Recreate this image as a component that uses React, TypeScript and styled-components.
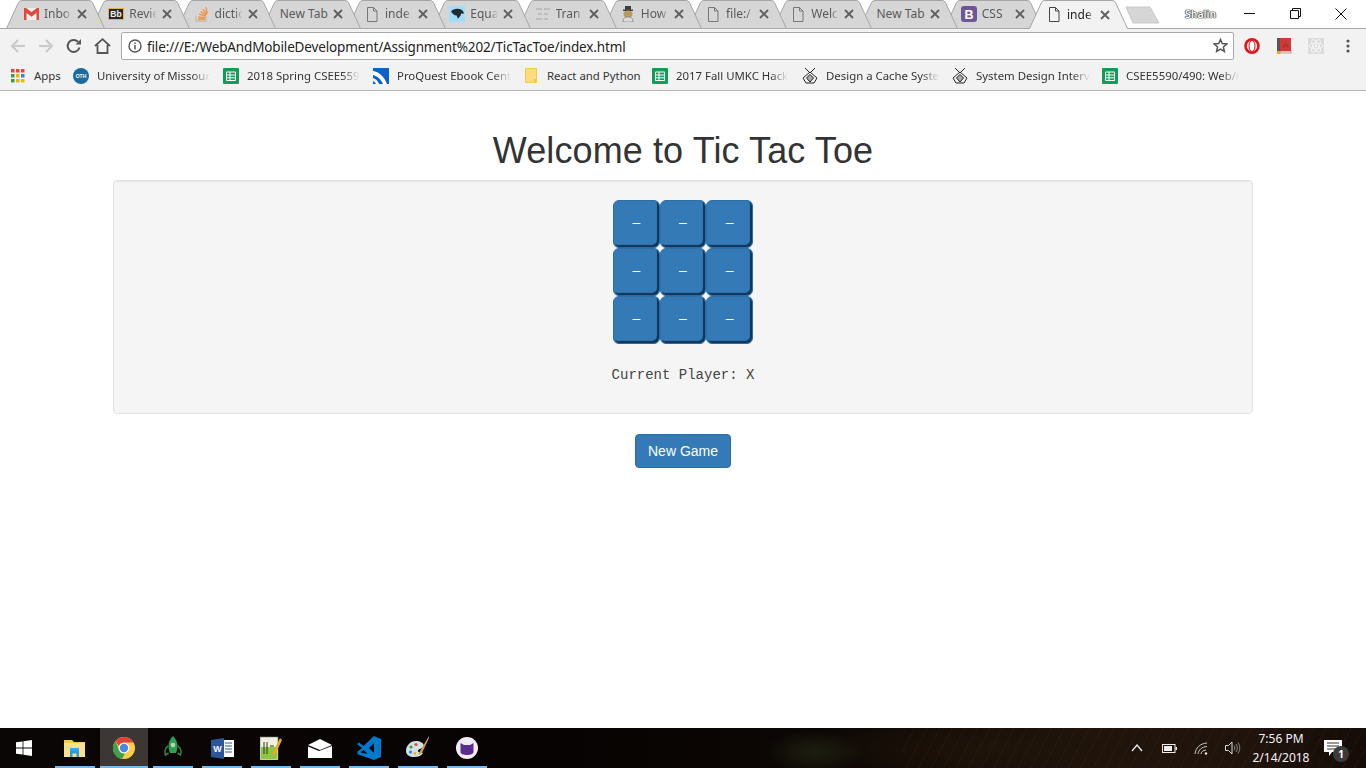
import React from "react";
import styled, { createGlobalStyle } from "styled-components";

const Global = createGlobalStyle`
  html, body { margin: 0; padding: 0; height: 100%; overflow: hidden; background: #fff; }
  #root { height: 100%; }
  * { box-sizing: border-box; }
`;

const Screen = styled.div`
  display: flex; flex-direction: column; width: 1366px; height: 768px; overflow: hidden;
  font-family: "Noto Sans", "Open Sans", sans-serif;
`;

/* ---------- title bar and tabs ---------- */
const TitleBar = styled.div`
  display: flex; height: 29px; background: #fff; border-bottom: 1px solid #a6a6a6; padding-left: 6px; flex: none;
`;
const TabWrap = styled.div<{ $z: number; $active?: boolean }>`
  position: relative; z-index: ${p => p.$z}; width: 99px; height: ${p => (p.$active ? 29 : 28)}px; flex: none;
  display: flex; align-items: center; padding: 0 18px 0 17px;
  & + & { margin-left: -13.75px; }
`;
const TabShape = styled.svg`
  position: absolute; left: 0; top: 0; width: 99px; height: 29px; z-index: -1;
`;
const FavSlot = styled.span`
  width: 16px; height: 16px; margin-right: 5px; flex: none; display: flex; align-items: center; justify-content: center;
`;
const TabTitle = styled.span<{ $active?: boolean; $plain?: boolean }>`
  flex: 1; min-width: 0; overflow: hidden; white-space: nowrap; font-size: 12px; line-height: 16px;
  margin-left: ${p => (p.$plain ? "1px" : "0")};
  color: ${p => (p.$active ? "#222" : "#5a5a5a")};
  ${p => p.$plain ? "" : `
    -webkit-mask-image: linear-gradient(to right, #000 70%, transparent 100%);
    mask-image: linear-gradient(to right, #000 70%, transparent 100%);
  `}
`;
const CloseSlot = styled.span`
  width: 10px; height: 10px; margin-left: 5px; flex: none; display: flex;
`;
const NewTabButton = styled.svg`
  width: 36px; height: 19px; margin: 6px 0 0 -3px; flex: none;
`;
const Profile = styled.span`
  margin-left: 24px; width: 31px; font-size: 10.5px; line-height: 28px; color: #fff; font-weight: 600;
  text-shadow: 0 0 1px #222, 0 0 1px #222, 0 0 1px #333, 0 0 1px #333;
  white-space: nowrap; flex: none;
`;
const WindowControls = styled.div`
  margin-left: auto; padding-right: 2px; display: flex; flex: none;
`;
const WinButton = styled.div`
  width: 46px; height: 27px; display: flex; align-items: center; justify-content: center;
`;

/* ---------- toolbar ---------- */
const Toolbar = styled.div`
  display: flex; align-items: center; height: 33px; background: #f2f2f2; padding: 0 2px 0 4px; flex: none;
`;
const NavButton = styled.div`
  width: 28px; height: 28px; display: flex; align-items: center; justify-content: center; flex: none;
`;
const Omnibox = styled.div`
  flex: 1; height: 28px; margin: 0 2px 0 5px; background: #fff; border: 1px solid #a9a9a9; border-radius: 2px;
  display: flex; align-items: center; padding: 0 5px 0 6px; min-width: 0;
`;
const UrlText = styled.span`
  flex: 1; margin-left: 5px; padding-top: 2px; font-size: 13.5px; letter-spacing: -0.14px; color: #222; white-space: nowrap;
`;
const ExtButton = styled.div`
  width: 32px; height: 28px; display: flex; align-items: center; justify-content: center; flex: none;
`;

/* ---------- bookmarks ---------- */
const Bookmarks = styled.div`
  display: flex; align-items: center; height: 29px; background: #f2f2f2; border-bottom: 1px solid #b4b4b4;
  padding-left: 10px; flex: none;
`;
const Bookmark = styled.div<{ $w: number }>`
  width: ${p => p.$w}px; flex: none; display: flex; align-items: center; height: 100%; padding-bottom: 1px;
`;
const BookmarkIcon = styled.span`
  width: 16px; height: 16px; margin-right: 8px; flex: none; display: flex; align-items: center; justify-content: center;
`;
const BookmarkText = styled.span<{ $fade?: boolean }>`
  font-size: 11.4px; color: #333; white-space: nowrap; overflow: hidden; max-width: 114px;
  ${p => p.$fade ? "-webkit-mask-image: linear-gradient(to right, #000 84%, transparent 100%); mask-image: linear-gradient(to right, #000 84%, transparent 100%);" : ""}
`;

/* ---------- page ---------- */
const Page = styled.main`
  flex: 1; background: #fff; min-height: 0; display: flex; flex-direction: column; align-items: center;
  font-family: "Liberation Sans", Arial, sans-serif; color: #333;
`;
const Container = styled.div`
  width: 1170px; padding: 0 15px; text-align: center;
`;
const Heading = styled.h1`
  margin: 40px 0 9px; font-size: 36px; line-height: 40px; font-weight: 500; letter-spacing: 0.1px; color: #333;
`;
const Well = styled.section`
  min-height: 20px; padding: 19px; margin-bottom: 20px; background: #f5f5f5; border: 1px solid #e3e3e3; border-radius: 4px;
  box-shadow: inset 0 1px 1px rgba(0,0,0,.05);
  display: flex; flex-direction: column; align-items: center;
`;
const Board = styled.div`
  display: grid; grid-template-columns: repeat(3, 46.67px); grid-auto-rows: 48px; width: 140px;
`;
const Cell = styled.button`
  margin: 0; padding: 0 0 4px; border: 1px solid #2e6da4; border-radius: 6px; background: #337ab7; color: #fff;
  box-shadow: inset -2px -2px 1px #123456;
  font-family: "Liberation Sans", Arial, sans-serif; font-size: 14px; line-height: 20px; display: flex; align-items: center; justify-content: center;
`;
const Status = styled.p`
  margin: 21px 0 9px; font-family: "Liberation Mono", "Courier New", monospace; font-size: 14px; line-height: 20px; color: #444;
`;
const PrimaryButton = styled.button`
  padding: 6px 12px; font-family: "Liberation Sans", Arial, sans-serif; font-size: 14px; line-height: 20px; color: #fff;
  background: #337ab7; border: 1px solid #2e6da4; border-radius: 4px;
`;

/* ---------- taskbar ---------- */
const Taskbar = styled.footer`
  height: 40px; flex: none; display: flex; align-items: stretch; color: #fff;
  background:
    repeating-linear-gradient(118deg, rgba(110,85,55,.09) 0 1px, rgba(0,0,0,0) 1px 11px) right / 34% 100% no-repeat,
    radial-gradient(ellipse 50px 22px at 815px 24px, #1d1f10 0%, rgba(29,31,16,0) 100%),
    radial-gradient(ellipse 200px 30px at 1020px 20px, #1f1409 0%, rgba(31,20,9,0) 100%),
    linear-gradient(to right, #0a0606 0%, #0b0505 15%, #060302 40%, #0d0704 60%, #20140c 80%, #1f130c 92%, #150c07 100%);
`;
const StartButton = styled.div`
  width: 51px; display: flex; align-items: center; justify-content: center; padding-right: 3px; flex: none;
`;
const TaskItem = styled.div<{ $active?: boolean }>`
  position: relative; width: 49px; flex: none; display: flex; align-items: center; justify-content: center; padding-right: 1px;
  background: ${p => (p.$active ? "linear-gradient(to right, #3c3634 48px, transparent 48px)" : "transparent")};
  &::after {
    content: ""; position: absolute; bottom: 0; height: 2px; background: #76b9ed;
    left: ${p => (p.$active ? "0" : "4px")}; right: ${p => (p.$active ? "1px" : "5px")};
  }
`;
const Tray = styled.div`
  margin-left: auto; display: flex; align-items: center; padding-right: 13px; flex: none;
`;
const TrayItem = styled.div`
  width: 32px; display: flex; align-items: center; justify-content: center; height: 100%;
`;
const Clock = styled.div`
  width: 64px; text-align: center; font-size: 12px; line-height: 19px; color: #f2f2f2; white-space: nowrap;
`;
const Notify = styled.div`
  position: relative; width: 40px; height: 100%; display: flex; align-items: center; justify-content: center;
`;
const NotifyBadge = styled.span`
  position: absolute; left: 20px; top: 18px; width: 16px; height: 16px; border-radius: 50%; background: #3b3b3b;
  font-size: 10px; font-weight: 700; line-height: 16px; text-align: center; color: #fff;
`;

/* ---------- drawings ---------- */
const Gmail = () => (
  <svg width="15" height="12" viewBox="0 0 15 12">
    <rect width="15" height="12" fill="#eee" />
    <path d="M0 12V1.5L7.5 7 15 1.5V12h-2.5V5L7.5 8.7 2.5 5v7z" fill="#db4c3f" />
    <path d="M0 0h2l5.5 4L13 0h2v2L7.5 7.5 0 2z" fill="#db4c3f" />
  </svg>
);
const Bb = () => (
  <svg width="16" height="12" viewBox="0 0 16 12">
    <rect x=".5" y=".5" width="15" height="11" fill="#262626" stroke="#e6b04a" />
    <text x="8" y="9" textAnchor="middle" fontFamily="Liberation Sans" fontWeight="700" fontSize="8.5" fill="#f4f4f4">Bb</text>
  </svg>
);
const StackIcon = () => (
  <svg width="13" height="16" viewBox="0 0 13 16" fill="none" stroke="#f2913d" strokeWidth="1.3">
    <path d="M1 10v5h10v-5" stroke="#c9b9a8" />
    <path d="M3 13h7M3.2 10.800l6.800.9M4 8.200l6.400 2M5.600 5.600l5.600 3.500M7.800 3.400l4.200 4.800M10.600 1.200l1.800 6" />
  </svg>
);
const FileIcon = ({ color = "#777" }: { color?: string }) => (
  <svg width="12" height="15" viewBox="0 0 12 15" fill="none" stroke={color} strokeWidth="1">
    <path d="M1.500.5h6l3.500 3.500v10.500H1.500z" />
    <path d="M7.500.5V4H11" />
  </svg>
);
const EquaIcon = () => (
  <svg width="16" height="16" viewBox="0 0 16 16">
    <rect width="16" height="16" fill="#a2dcf5" />
    <path d="M2 5.500C4 2.500 9 2 12 3.500c1.500.8 2.500 2 3 4-1 .2-2 .2-2.800 0-.5 2.500-2 4-3.500 5l-1-3C5 9.500 3.500 7.500 2 5.500z" fill="#1f2b33" />
  </svg>
);
const TransIcon = () => (
  <svg width="14" height="12" viewBox="0 0 14 12" fill="none" stroke="#bdbdbd" strokeWidth="2">
    <path d="M0 1h6M8 1h6M2 6h4M8 6h4M0 11h6M8 11h4" />
  </svg>
);
const HowIcon = () => (
  <svg width="14" height="16" viewBox="0 0 14 16">
    <rect x="4" y="0" width="6" height="4" fill="#3e3e3e" />
    <rect x="2" y="3.500" width="10" height="1.500" fill="#3e3e3e" />
    <ellipse cx="7" cy="8" rx="4.500" ry="3.500" fill="#b89a60" />
    <path d="M2 16c0-4 2-5 5-5s5 1 5 5z" fill="#ddd" stroke="#666" strokeWidth=".6" />
  </svg>
);
const BootstrapIcon = () => (
  <svg width="16" height="16" viewBox="0 0 16 16">
    <rect width="16" height="16" rx="3" fill="#6f5499" />
    <text x="8" y="12.500" textAnchor="middle" fontFamily="Liberation Sans" fontWeight="700" fontSize="12.500" fill="#fff">B</text>
  </svg>
);
const CloseX = ({ color = "#5f5f5f" }: { color?: string }) => (
  <svg width="10" height="10" viewBox="0 0 10 10" stroke={color} strokeWidth="1.800" fill="none">
    <path d="M1 1l8 8M9 1l-8 8" />
  </svg>
);
const TabBg = ({ active }: { active?: boolean }) => (
  <TabShape viewBox="0 0 99 29">
    {active ? (
      <>
        <path d="M.5 29 12.500 2.500Q13.500.5 16 .5H83Q85.500.5 86.500 2.500L98.500 29z" fill="#f2f2f2" />
        <path d="M.5 28.500 12.500 2.500Q13.500.5 16 .5H83Q85.500.5 86.500 2.500L98.500 28.500" fill="none" stroke="#a6a6a6" />
      </>
    ) : (
      <path d="M.5 28.500 12.500 2.500Q13.500.5 16 .5H83Q85.500.5 86.500 2.500L98.500 28.500z" fill="#d6d6d6" stroke="#a6a6a6" />
    )}
  </TabShape>
);
const NavArrow = ({ right, color }: { right?: boolean; color: string }) => (
  <svg width="16" height="14" viewBox="0 0 16 14" fill="none" stroke={color} strokeWidth="2" style={right ? { transform: "scaleX(-1)" } : undefined}>
    <path d="M15 7H2M8 1 2 7l6 6" />
  </svg>
);
const Reload = () => (
  <svg width="16" height="16" viewBox="0 0 16 16" fill="none">
    <path d="M13.500 9.500A6 6 0 1 1 12 3.700" stroke="#555" strokeWidth="2" />
    <path d="M9.500 6.500H15V1z" fill="#555" />
  </svg>
);
const HomeIcon = () => (
  <svg width="17" height="16" viewBox="0 0 17 16" fill="none" stroke="#555" strokeWidth="1.800">
    <path d="M1 8 8.500 1.200 16 8M3.500 7v8h10V7" />
  </svg>
);
const InfoIcon = () => (
  <svg width="14" height="14" viewBox="0 0 14 14" fill="none">
    <circle cx="7" cy="7" r="6" stroke="#555" strokeWidth="1.400" />
    <path d="M7 6v4.500M7 3.500v1.400" stroke="#555" strokeWidth="1.500" />
  </svg>
);
const StarIcon = () => (
  <svg width="15" height="15" viewBox="0 0 15 15" fill="none" stroke="#555" strokeWidth="1.500">
    <path d="M7.500 1.500 9.300 5.600l4.500.4-3.400 3 1 4.400-3.900-2.300-3.900 2.300 1-4.400-3.400-3 4.500-.4z" />
  </svg>
);
const OperaIcon = () => (
  <svg width="16" height="16" viewBox="0 0 16 16" fill="none">
    <ellipse cx="8" cy="8" rx="6.500" ry="6.700" stroke="#e0141d" strokeWidth="2.600" />
    <ellipse cx="8" cy="8" rx="3" ry="5.500" fill="#fff" stroke="#e0141d" strokeWidth="1" />
  </svg>
);
const BookIcon = () => (
  <svg width="15" height="16" viewBox="0 0 15 16">
    <rect x="0" y="0" width="3" height="15" fill="#555" />
    <rect x="3" y="0" width="11" height="13" fill="#cf3a34" />
    <rect x="3" y="13" width="11" height="2" fill="#eee" stroke="#c33" strokeWidth=".5" />
    <rect x="0" y="13" width="3" height="3" fill="#e8a820" />
    <text x="8.500" y="10" textAnchor="middle" fontFamily="Liberation Sans" fontSize="9" fill="#a82420">A</text>
  </svg>
);
const ReactExt = () => (
  <svg width="16" height="16" viewBox="0 0 16 16" fill="none">
    <rect width="16" height="16" fill="#dcdcdc" />
    <g stroke="#f5f5f5" strokeWidth=".9">
      <ellipse cx="8" cy="8" rx="7" ry="2.800" />
      <ellipse cx="8" cy="8" rx="7" ry="2.800" transform="rotate(60 8 8)" />
      <ellipse cx="8" cy="8" rx="7" ry="2.800" transform="rotate(120 8 8)" />
    </g>
    <circle cx="8" cy="8" r="1.400" fill="#f5f5f5" />
  </svg>
);
const MenuDots = () => (
  <svg width="4" height="14" viewBox="0 0 4 14" fill="#555">
    <circle cx="2" cy="2" r="1.600" /><circle cx="2" cy="7" r="1.600" /><circle cx="2" cy="12" r="1.600" />
  </svg>
);
const AppsIcon = () => (
  <svg width="14" height="14" viewBox="0 0 14 14">
    {[["#e8453c", "#e8453c", "#e8453c"], ["#3a9b4c", "#f5b400", "#3a7de0"], ["#3a9b4c", "#f5b400", "#f5b400"]].map((row, y) =>
      row.map((c, x) => <rect key={`${x}${y}`} x={x * 5} y={y * 5} width="3.500" height="3.500" fill={c} />)
    )}
  </svg>
);
const UmIcon = () => (
  <svg width="16" height="16" viewBox="0 0 16 16">
    <circle cx="8" cy="8" r="8" fill="#1d6a9c" />
    <text x="8" y="10" textAnchor="middle" fontFamily="Liberation Sans" fontWeight="700" fontSize="5" fill="#fff">OTH</text>
  </svg>
);
const SheetIcon = () => (
  <svg width="16" height="16" viewBox="0 0 16 16" fill="none">
    <rect width="16" height="16" rx="1" fill="#109d58" />
    <path d="M3.500 4h9v8.500h-9zM3.500 7h9M3.500 9.800h9M7 4v8.500" stroke="#fff" strokeWidth="1" />
  </svg>
);
const ProQuestIcon = () => (
  <svg width="16" height="16" viewBox="0 0 16 16">
    <rect width="16" height="16" fill="#0d62c9" />
    <path d="M0 3c6 1 11 5 14 13h-4C8 11 4 8 0 7zM0 10c3 1 5 3 6 6H3c-.5-1.500-1.800-2.500-3-3z" fill="#fff" />
  </svg>
);
const FolderBm = () => (
  <svg width="12" height="15" viewBox="0 0 12 15">
    <path d="M.5.500h11v14H.5z" fill="#fbdc7f" stroke="#f2c94c" />
    <rect x="9" y="11" width="2.500" height="3.500" fill="#f2c94c" />
  </svg>
);
const CacheIcon = () => (
  <svg width="16" height="16" viewBox="0 0 16 16" fill="none" stroke="#222" strokeWidth="1">
    <path d="M3 0l5 5 5-5" />
    <path d="M1 10l7-6 7 6-3 5H4z" />
    <path d="M4.500 10l3.500 4 3.500-4L8 6.500z" fill="#aaa" />
  </svg>
);
const WinLogo = () => (
  <svg width="16" height="16" viewBox="0 0 16 16" fill="#fff">
    <path d="M0 2.300 6.600 1.400v6.200H0zM7.400 1.300 16 0v7.600H7.400zM0 8.400h6.600v6.200L0 13.700zM7.400 8.400H16V16l-8.600-1.300z" />
  </svg>
);
const Explorer = () => (
  <svg width="22" height="18" viewBox="0 0 22 18">
    <path d="M0 1h8l2 2h11v15H0z" fill="#f5c94e" />
    <rect x="0" y="4" width="21" height="14" fill="#fbe08a" />
    <path d="M6 18v-7h9v7h-2.500v-3.500h-4V18z" fill="#2a9ae0" />
    <rect x="6" y="9" width="9" height="2.500" fill="#35aaf0" />
  </svg>
);
const ChromeLogo = () => (
  <svg width="22" height="22" viewBox="0 0 22 22">
    <circle cx="11" cy="11" r="11" fill="#ffce44" />
    <path d="M11 0a11 11 0 0 1 9.530 5.500H11A5.500 5.500 0 0 0 5.800 9.200L2.600 3.900A11 11 0 0 1 11 0z" fill="#e0433a" />
    <path d="M2.600 3.900 6.100 13.600A5.500 5.500 0 0 0 12 16.400L9 22A11 11 0 0 1 2.600 3.900z" fill="#3ca24f" />
    <circle cx="11" cy="11" r="5.300" fill="#fff" />
    <circle cx="11" cy="11" r="4.200" fill="#4a86e8" />
  </svg>
);
const Rocket = () => (
  <svg width="18" height="24" viewBox="0 0 18 24">
    <path d="M9 0c3 3 4.500 6 4.500 10 0 3-.8 5-1.500 7H6c-.7-2-1.500-4-1.500-7C4.500 6 6 3 9 0z" fill="#2f9e4f" />
    <circle cx="9" cy="9" r="2.300" fill="#a8e2a6" />
    <path d="M4 10c-3 2-3.500 6-2.500 9l3-2M14 10c3 2 3.500 6 2.500 9l-3-2" fill="none" stroke="#3a7d42" strokeWidth="1.600" />
  </svg>
);
const Word = () => (
  <svg width="23" height="21" viewBox="0 0 23 21">
    <rect x="9" y="2" width="14" height="17" fill="#fff" />
    <path d="M14 5h7M14 8h7M14 11h7M14 14h7" stroke="#2b579a" strokeWidth="1.200" />
    <path d="M0 2 13 0v21L0 19z" fill="#2b579a" />
    <text x="6.500" y="14" textAnchor="middle" fontFamily="Liberation Sans" fontWeight="700" fontSize="9" fill="#fff">W</text>
  </svg>
);
const Notepad = () => (
  <svg width="22" height="24" viewBox="0 0 22 24">
    <rect x="0" y="1" width="18" height="23" fill="#eef2dc" stroke="#777" strokeWidth=".6" />
    <rect x="1" y="11" width="16" height="12" fill="#8dc63f" />
    <path d="M4 6v12M7 6v12M10 10h4" stroke="#333" strokeWidth="1" />
    <path d="M20 2 12 18l3 1 7-15z" fill="#e6a82a" />
  </svg>
);
const Mail = () => (
  <svg width="24" height="19" viewBox="0 0 24 19">
    <path d="M0 6 12 0l12 6-12 5z" fill="#fff" />
    <path d="M0 7.500 11 12l13-5V19H0z" fill="#fff" />
  </svg>
);
const VsCode = () => (
  <svg width="24" height="24" viewBox="0 0 24 24">
    <path d="M17 0 24 3v18l-7 3L0 18l1-2 16 3z" fill="#007acc" />
    <path d="M17 0v24L6.500 14 2 17.500 0 16l5-4-5-4 2-1.500L6.500 10zM17 7l-5 5 5 5z" fill="#007acc" fillRule="evenodd" />
  </svg>
);
const Palette = () => (
  <svg width="24" height="24" viewBox="0 0 24 24">
    <path d="M10 5C4 5 0 10 0 15c0 4 4 6 8 6s7-1 9-4c-2-1-5 0-5-2 0-3 6-2 6-5 0-3-4-5-8-5z" fill="#cfe3e8" />
    <circle cx="5" cy="11" r="1.600" fill="#3a9b4c" /><circle cx="10" cy="8.500" r="1.600" fill="#e8453c" />
    <circle cx="4.500" cy="16" r="1.600" fill="#3a7de0" /><circle cx="9" cy="17.500" r="1.400" fill="#f5b400" />
    <path d="M23 0 14 15l-2 4 4-2L23 2z" fill="#d29a4a" />
  </svg>
);
const CatCircle = () => (
  <svg width="22" height="22" viewBox="0 0 22 22">
    <circle cx="11" cy="11" r="11" fill="#f2edf5" />
    <path d="M4.500 6 8 8h6l3.500-2v9c0 2-3 3-6.500 3s-6.500-1-6.500-3z" fill="#5c2d91" />
  </svg>
);
const Chevron = () => (
  <svg width="12" height="8" viewBox="0 0 12 8" fill="none" stroke="#eee" strokeWidth="1.300"><path d="M1 7l5-6 5 6" /></svg>
);
const Battery = () => (
  <svg width="15" height="9" viewBox="0 0 15 9" fill="none">
    <rect x=".5" y=".5" width="12.500" height="8" stroke="#eee" />
    <rect x="2" y="2" width="8" height="5" fill="#eee" />
    <rect x="13.500" y="3" width="1.500" height="3" fill="#eee" />
  </svg>
);
const Wifi = () => (
  <svg width="14" height="13" viewBox="0 0 14 13" fill="none" stroke="#ccc" strokeWidth="1">
    <path d="M1 12C1.500 6 6 1.500 13 1M4 12c.5-4 3.500-7 9-7.500M7 12c.3-2 2-3.800 5-4" />
    <circle cx="12" cy="11.500" r="1.200" fill="#eee" stroke="none" />
  </svg>
);
const Volume = () => (
  <svg width="16" height="14" viewBox="0 0 16 14" fill="none" stroke="#ddd" strokeWidth="1">
    <path d="M.5 4.500h3L7 1v12L3.500 9.500h-3z" />
    <path d="M9 4.500c1 1.500 1 3.500 0 5M11 3c1.700 2.500 1.700 5.500 0 8M13 1.500c2.300 3.500 2.300 7.500 0 11" stroke="#888" />
  </svg>
);
const Bubble = () => (
  <svg width="18" height="16" viewBox="0 0 18 16">
    <path d="M0 0h18v12H8l-3 4v-4H0z" fill="#fff" />
    <path d="M3 3h12M3 6h12M3 9h8" stroke="#333" strokeWidth="1" />
  </svg>
);

/* ---------- data ---------- */
const tabs: { title: string; icon?: React.ReactNode }[] = [
  { title: "Inbo", icon: <Gmail /> },
  { title: "Revie", icon: <Bb /> },
  { title: "dictio", icon: <StackIcon /> },
  { title: "New Tab" },
  { title: "inde", icon: <FileIcon /> },
  { title: "Equa", icon: <EquaIcon /> },
  { title: "Tran", icon: <TransIcon /> },
  { title: "How", icon: <HowIcon /> },
  { title: "file:/", icon: <FileIcon /> },
  { title: "Welc", icon: <FileIcon /> },
  { title: "New Tab" },
  { title: "CSS", icon: <BootstrapIcon /> },
];
const marks: { title: string; icon: React.ReactNode; w: number }[] = [
  { title: "University of Missour", icon: <UmIcon />, w: 150 },
  { title: "2018 Spring CSEE559", icon: <SheetIcon />, w: 150 },
  { title: "ProQuest Ebook Cent", icon: <ProQuestIcon />, w: 150 },
  { title: "React and Python", icon: <FolderBm />, w: 129 },
  { title: "2017 Fall UMKC Hack", icon: <SheetIcon />, w: 150 },
  { title: "Design a Cache Syste", icon: <CacheIcon />, w: 150 },
  { title: "System Design Interv", icon: <CacheIcon />, w: 150 },
  { title: "CSEE5590/490: Web/(", icon: <SheetIcon />, w: 150 },
];
const taskIcons: React.ReactNode[] = [<Explorer />, <ChromeLogo />, <Rocket />, <Word />, <Notepad />, <Mail />, <VsCode />, <Palette />, <CatCircle />];

export default function App() {
  return (
    <Screen>
      <Global />
      <TitleBar>
        {tabs.map((t, i) => (
          <TabWrap key={i} $z={20 - i}>
            <TabBg />
            {t.icon && <FavSlot>{t.icon}</FavSlot>}
            <TabTitle $plain={!t.icon}>{t.title}</TabTitle>
            <CloseSlot><CloseX /></CloseSlot>
          </TabWrap>
        ))}
        <TabWrap $z={30} $active>
          <TabBg active />
          <FavSlot><FileIcon color="#444" /></FavSlot>
          <TabTitle $active>inde</TabTitle>
          <CloseSlot><CloseX /></CloseSlot>
        </TabWrap>
        <NewTabButton viewBox="0 0 36 19">
          <path d="M1 1h24l9 16H8z" fill="#d6d6d6" stroke="#c9c9c9" strokeLinejoin="round" />
        </NewTabButton>
        <Profile>Shalin</Profile>
        <WindowControls>
          <WinButton>
            <svg width="11" height="11" viewBox="0 0 11 11" stroke="#111" fill="none"><path d="M0 5.500h11" /></svg>
          </WinButton>
          <WinButton>
            <svg width="11" height="11" viewBox="0 0 11 11" stroke="#111" fill="none"><path d="M.5 2.500h8v8h-8zM2.500 2.500v-2h8v8h-2" /></svg>
          </WinButton>
          <WinButton>
            <svg width="12" height="12" viewBox="0 0 12 12" stroke="#111" fill="none"><path d="M.5.500l11 11M11.500.500l-11 11" /></svg>
          </WinButton>
        </WindowControls>
      </TitleBar>

      <Toolbar>
        <NavButton><NavArrow color="#c9c9c9" /></NavButton>
        <NavButton><NavArrow right color="#c9c9c9" /></NavButton>
        <NavButton><Reload /></NavButton>
        <NavButton><HomeIcon /></NavButton>
        <Omnibox>
          <InfoIcon />
          <UrlText>file:///E:/WebAndMobileDevelopment/Assignment%202/TicTacToe/index.html</UrlText>
          <StarIcon />
        </Omnibox>
        <ExtButton><OperaIcon /></ExtButton>
        <ExtButton><BookIcon /></ExtButton>
        <ExtButton><ReactExt /></ExtButton>
        <ExtButton><MenuDots /></ExtButton>
      </Toolbar>

      <Bookmarks>
        <Bookmark $w={63}>
          <BookmarkIcon><AppsIcon /></BookmarkIcon>
          <BookmarkText>Apps</BookmarkText>
        </Bookmark>
        {marks.map(m => (
          <Bookmark key={m.title} $w={m.w}>
            <BookmarkIcon>{m.icon}</BookmarkIcon>
            <BookmarkText $fade={m.w === 150}>{m.title}</BookmarkText>
          </Bookmark>
        ))}
      </Bookmarks>

      <Page>
        <Container>
          <Heading>Welcome to Tic Tac Toe</Heading>
          <Well>
            <Board>
              {Array.from({ length: 9 }, (_, i) => <Cell key={i}>–</Cell>)}
            </Board>
            <Status>Current Player: X</Status>
          </Well>
          <PrimaryButton>New Game</PrimaryButton>
        </Container>
      </Page>

      <Taskbar>
        <StartButton><WinLogo /></StartButton>
        {taskIcons.map((icon, i) => (
          <TaskItem key={i} $active={i === 1}>{icon}</TaskItem>
        ))}
        <Tray>
          <TrayItem><Chevron /></TrayItem>
          <TrayItem><Battery /></TrayItem>
          <TrayItem><Wifi /></TrayItem>
          <TrayItem><Volume /></TrayItem>
          <Clock>7:56 PM<br />2/14/2018</Clock>
          <Notify>
            <Bubble />
            <NotifyBadge>1</NotifyBadge>
          </Notify>
        </Tray>
      </Taskbar>
    </Screen>
  );
}
